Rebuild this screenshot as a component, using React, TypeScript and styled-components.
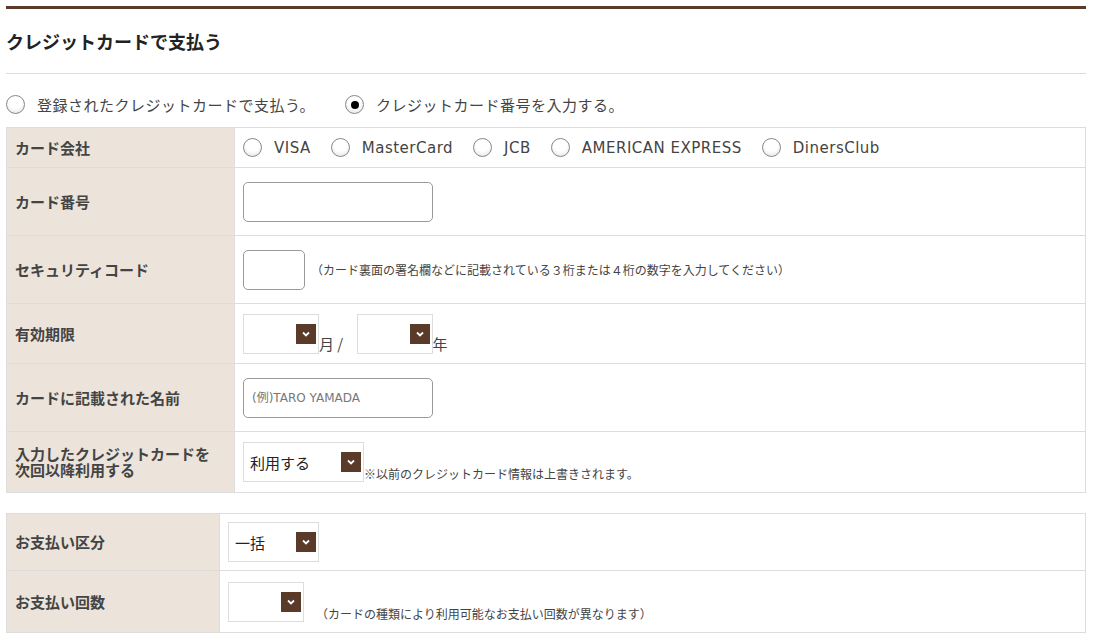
import React, { useState } from "react";
import styled, { createGlobalStyle } from "styled-components";

const GlobalStyle = createGlobalStyle`
  body {
    margin: 0;
    background: #fff;
    font-family: "Noto Sans CJK JP", "Noto Sans", sans-serif;
    color: #333;
  }
`;

const Page = styled.div`
  padding: 6px 9px 6px 6px;
`;

const TopBar = styled.div`
  height: 3px;
  background: #5a3a28;
`;

const Title = styled.h2`
  margin: 0;
  padding: 20px 0 20px;
  font-size: 18px;
  font-weight: bold;
  color: #222;
  line-height: 24px;
  border-bottom: 1px solid #ddd;
`;

const MethodRow = styled.div`
  display: flex;
  gap: 30px;
  padding: 20px 0 12px;
  font-size: 15px;
  color: #444;
`;

const RadioLabel = styled.label`
  display: inline-flex;
  align-items: center;
  gap: 12px;
  letter-spacing: 0.5px;
  cursor: pointer;
`;

const RadioDot = styled.span<{ checked: boolean }>`
  width: 19px;
  height: 19px;
  box-sizing: border-box;
  border-radius: 50%;
  border: 1px solid #888;
  background: radial-gradient(circle at 50% 35%, #fff 45%, #ddd 100%);
  display: inline-flex;
  align-items: center;
  justify-content: center;
  &::after {
    content: "";
    width: 8px;
    height: 8px;
    border-radius: 50%;
    background: ${({ checked }) => (checked ? "#000" : "transparent")};
  }
`;

const Table = styled.table<{ labelWidth: number }>`
  width: 100%;
  border-collapse: collapse;
  margin-bottom: 20px;
  td, th {
    border: 1px solid #ddd;
  }
  th {
    width: ${({ labelWidth }) => labelWidth}px;
    box-sizing: border-box;
  }
`;

const Label = styled.th<{ h: number }>`
  background: #ece3da;
  text-align: left;
  padding: 0 8px;
  height: ${({ h }) => h}px;
  font-size: 15px;
  font-weight: bold;
  color: #444;
  line-height: 16px;
`;

const Cell = styled.td`
  padding: 0 8px;
  font-size: 15px;
  color: #444;
`;

const Inline = styled.div<{ center?: boolean }>`
  display: flex;
  align-items: ${({ center }) => (center ? "center" : "flex-end")};
`;

const BrandRow = styled.div`
  display: flex;
  gap: 20px;
  letter-spacing: 0.8px;
  font-family: "DejaVu Sans", "Noto Sans CJK JP", sans-serif;
  font-size: 15px;
`;

const TextInput = styled.input<{ w: number }>`
  width: ${({ w }) => w}px;
  height: 40px;
  box-sizing: border-box;
  border: 1px solid #999;
  border-radius: 5px;
  padding: 0 8px;
  font-family: "DejaVu Sans", "Noto Sans CJK JP", sans-serif;
  font-size: 12px;
  color: #333;
  &::placeholder {
    color: #777;
  }
`;

const SelectBox = styled.div<{ w: number }>`
  width: ${({ w }) => w}px;
  height: 40px;
  box-sizing: border-box;
  border: 1px solid #ddd;
  display: flex;
  align-items: center;
  justify-content: space-between;
  padding: 0 2px 0 6px;
  font-size: 15px;
  color: #222;
`;

const Arrow = styled.span`
  width: 20px;
  height: 20px;
  background: #5a3a28;
  display: inline-flex;
  align-items: center;
  justify-content: center;
`;

const Note = styled.span<{ gap?: number }>`
  font-size: 12px;
  color: #444;
  margin-left: ${({ gap }) => gap ?? 4}px;
`;

const Unit = styled.span`
  font-size: 15px;
  color: #444;
  margin-right: 10px;
  white-space: pre;
`;

const Select = ({ w, value }: { w: number; value?: string }) => (
  <SelectBox w={w}>
    <span>{value}</span>
    <Arrow>
      <svg width="10" height="10" viewBox="0 0 10 10">
        <path d="M2 3.5 L5 6.5 L8 3.5" stroke="#fff" strokeWidth="1.8" fill="none" />
      </svg>
    </Arrow>
  </SelectBox>
);

export default function App() {
  const [method, setMethod] = useState(1);
  const [brand, setBrand] = useState(-1);
  const brands = ["VISA", "MasterCard", "JCB", "AMERICAN EXPRESS", "DinersClub"];
  return (
    <Page>
      <GlobalStyle />
      <TopBar />
      <Title>クレジットカードで支払う</Title>
      <MethodRow>
        {["登録されたクレジットカードで支払う。", "クレジットカード番号を入力する。"].map((t, i) => (
          <RadioLabel key={t} onClick={() => setMethod(i)}>
            <RadioDot checked={method === i} />
            {t}
          </RadioLabel>
        ))}
      </MethodRow>
      <Table labelWidth={228}>
        <tbody>
          <tr>
            <Label h={40}>カード会社</Label>
            <Cell>
              <BrandRow>
                {brands.map((b, i) => (
                  <RadioLabel key={b} onClick={() => setBrand(i)}>
                    <RadioDot checked={brand === i} />
                    {b}
                  </RadioLabel>
                ))}
              </BrandRow>
            </Cell>
          </tr>
          <tr>
            <Label h={68}>カード番号</Label>
            <Cell>
              <TextInput w={190} />
            </Cell>
          </tr>
          <tr>
            <Label h={68}>セキュリティコード</Label>
            <Cell>
              <Inline center>
                <TextInput w={62} />
                <Note gap={6}>（カード裏面の署名欄などに記載されている３桁または４桁の数字を入力してください）</Note>
              </Inline>
            </Cell>
          </tr>
          <tr>
            <Label h={60}>有効期限</Label>
            <Cell>
              <Inline>
                <Select w={76} />
                <Unit>月 / </Unit>
                <Select w={76} />
                <Unit>年</Unit>
              </Inline>
            </Cell>
          </tr>
          <tr>
            <Label h={68}>カードに記載された名前</Label>
            <Cell>
              <TextInput w={190} placeholder="(例)TARO YAMADA" />
            </Cell>
          </tr>
          <tr>
            <Label h={61}>
              入力したクレジットカードを
              <br />
              次回以降利用する
            </Label>
            <Cell>
              <Inline>
                <Select w={121} value="利用する" />
                <Note gap={0}>※以前のクレジットカード情報は上書きされます。</Note>
              </Inline>
            </Cell>
          </tr>
        </tbody>
      </Table>
      <Table labelWidth={213}>
        <tbody>
          <tr>
            <Label h={57}>お支払い区分</Label>
            <Cell>
              <Select w={91} value="一括" />
            </Cell>
          </tr>
          <tr>
            <Label h={62}>お支払い回数</Label>
            <Cell>
              <Inline>
                <Select w={76} />
                <Note gap={12}>（カードの種類により利用可能なお支払い回数が異なります）</Note>
              </Inline>
            </Cell>
          </tr>
        </tbody>
      </Table>
    </Page>
  );
}
